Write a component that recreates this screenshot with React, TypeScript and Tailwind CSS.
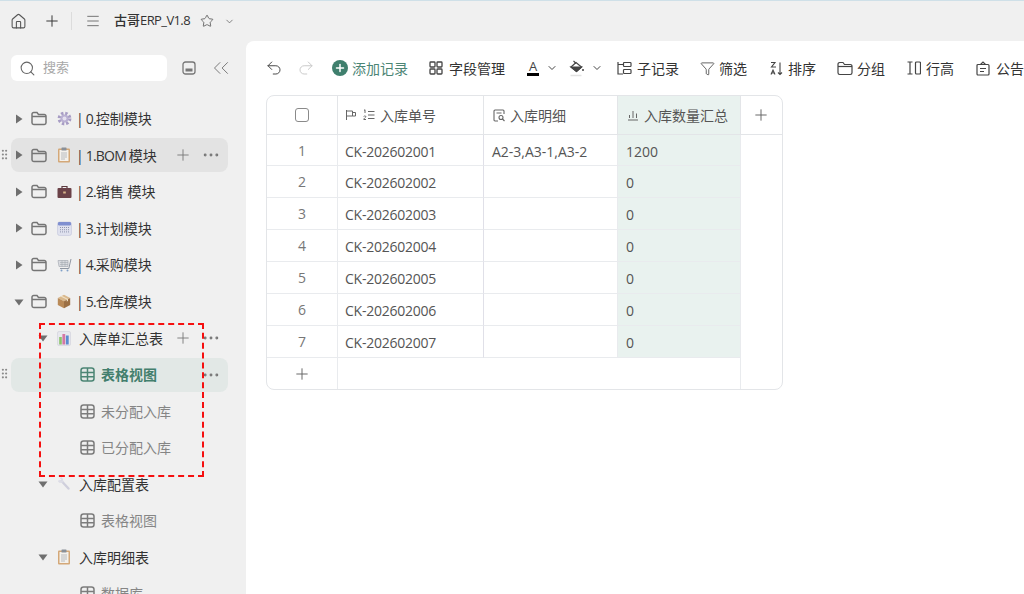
import { Plus, Ellipsis, House, Star, ChevronDown, Menu, Search, ChevronsLeft, Undo2, Redo2, Funnel, GripVertical } from 'lucide-react'
import type { ReactNode } from 'react'

/* ── Small hand drawn icons ── */
function Caret({ open }: { open?: boolean }) {
  return (
    <svg width="10" height="10" viewBox="0 0 10 10" className="shrink-0 text-[#6f6f6f]" fill="currentColor">
      {open ? <path d="M0.5 2.500h9L5 8.500z" /> : <path d="M2 .5v9L8.500 5z" />}
    </svg>
  )
}

function FolderIcon({ className = 'text-[#757575]', stroke = 1.5 }: { className?: string; stroke?: number }) {
  return (
    <svg width="16" height="15" viewBox="0 0 16 15" className={`shrink-0 ${className}`} fill="none" stroke="currentColor" strokeWidth={stroke}>
      <path d="M1 3.200A1.700 1.700 0 0 1 2.700 1.500H6l1.500 2h5.800A1.700 1.700 0 0 1 15 5.200v6.600a1.700 1.700 0 0 1-1.700 1.700H2.700A1.700 1.700 0 0 1 1 11.800z" />
      <path d="M1 5.500h14" />
    </svg>
  )
}

function GridIcon({ active }: { active?: boolean }) {
  return (
    <svg width="15" height="15" viewBox="0 0 15 15" className={`shrink-0 ${active ? 'text-[#4b8574]' : 'text-[#7c7c7c]'}`} fill="none" stroke="currentColor" strokeWidth="1.500">
      <rect x="1" y="1" width="13" height="13" rx="2.500" />
      <path d="M1 5.500h13M1 9.700h13M7.500 1v13" />
    </svg>
  )
}

function GearEmoji() {
  return (
    <svg width="15" height="15" viewBox="0 0 15 15">
      <circle cx="7.500" cy="7.500" r="5.200" fill="none" stroke="#a79cc4" strokeWidth="3.400" strokeDasharray="2.300 1.800" />
      <circle cx="7.500" cy="7.500" r="4" fill="#b9b0d2" />
      <circle cx="7.500" cy="7.500" r="2" fill="#e4e0ee" />
    </svg>
  )
}

function ClipEmoji() {
  return (
    <svg width="14" height="16" viewBox="0 0 14 16">
      <rect x="1" y="1.500" width="12" height="14" rx="1" fill="#d4a878" />
      <rect x="2.500" y="3" width="9" height="11" fill="#f4f1ec" />
      <rect x="4.500" y="0.500" width="5" height="3" rx="0.500" fill="#8a9098" />
      <path d="M4 6h6M4 8h6M4 10h6M4 12h4" stroke="#a9aeb5" strokeWidth="0.800" />
    </svg>
  )
}

function CaseEmoji() {
  return (
    <svg width="15" height="14" viewBox="0 0 15 14">
      <path d="M5 3V1.500h5V3" fill="none" stroke="#5d3a3f" strokeWidth="1.200" />
      <rect x="0.500" y="3" width="14" height="10" rx="1" fill="#6b4248" />
      <rect x="6.200" y="6.500" width="2.600" height="2" fill="#d8b48a" />
    </svg>
  )
}

function CalendarEmoji() {
  return (
    <svg width="15" height="15" viewBox="0 0 15 15">
      <rect x="0.500" y="1" width="14" height="13.500" rx="2" fill="#dfe1ee" stroke="#c3c6dc" strokeWidth="0.600" />
      <rect x="1" y="1" width="13" height="3.400" rx="1.200" fill="#7f8fd0" />
      <path d="M3 6.500h9M3 8.700h9M3 10.900h9" stroke="#8f95ae" strokeWidth="1" strokeDasharray="1 1" />
    </svg>
  )
}

function CartEmoji() {
  return (
    <svg width="15" height="14" viewBox="0 0 15 14" fill="none">
      <path d="M1 2.500h10v6H2z" fill="#d9dbe0" stroke="#a8acb4" strokeWidth="0.700" />
      <path d="M3 4.500h8M3 6.500h8M5 2.500v6M8 2.500v6" stroke="#9aa0a8" strokeWidth="0.500" />
      <path d="M14 1l-2.200 9.500H3" stroke="#8f96a2" strokeWidth="1" />
      <circle cx="4.500" cy="12.500" r="1" fill="#7fa0c8" />
      <circle cx="10.500" cy="12.500" r="1" fill="#7fa0c8" />
    </svg>
  )
}

function BoxEmoji() {
  return (
    <svg width="14" height="15" viewBox="0 0 14 15">
      <path d="M7 .8 13.200 4 7 7.200.8 4z" fill="#d9b88c" />
      <path d="M.8 4 7 7.200v7L.8 11z" fill="#b98a58" />
      <path d="M13.200 4 7 7.200v7l6.200-3.200z" fill="#9c7045" />
      <path d="M3.500 2.400 9.800 5.600v2l1.200-.6V5L4.700 1.800z" fill="#efe0c6" />
    </svg>
  )
}

function ChartEmoji() {
  return (
    <svg width="14" height="15" viewBox="0 0 14 15">
      <rect x="0.500" y="0.500" width="13" height="14" rx="1.500" fill="#e8e8ee" stroke="#d0d0da" strokeWidth="0.600" />
      <rect x="2.200" y="6" width="2.600" height="7.500" fill="#8cc46c" />
      <rect x="5.400" y="3" width="2.800" height="10.500" fill="#d478a4" />
      <rect x="8.900" y="4.500" width="2.800" height="9" fill="#5c8cd0" />
    </svg>
  )
}

function WrenchEmoji() {
  return (
    <svg width="14" height="14" viewBox="0 0 14 14" fill="none">
      <path d="M4.500 4 11.500 11.500" stroke="#cfcfdc" strokeWidth="2.400" strokeLinecap="round" />
      <path d="M1.500 3.500 3 5l2.500-.5L5 2 3.500.8" stroke="#dcdce6" strokeWidth="1.800" />
    </svg>
  )
}

/* ── Sidebar rows ── */
type RowProps = {
  label: string
  prefix?: string
  suffix?: string
  icon?: ReactNode
  open?: boolean
  level?: 0 | 1 | 2
  tone?: 'hover' | 'active'
  actions?: 'full' | 'more'
}

function TreeRow({ label, prefix, suffix, icon, open, level = 0, tone, actions }: RowProps) {
  const bg = tone === 'hover' ? 'bg-[#e3e3e3]' : tone === 'active' ? 'bg-[#e2e8e6]' : ''
  return (
    <div className="relative h-[36.55px] pl-[11px] w-[228px] flex items-center shrink-0">
      {tone && <GripVertical size={13} className="absolute left-[-2px] top-[11px] text-[#8a8a8a]" />}
      <div className={`h-[34px] w-[217px] rounded-lg flex items-center ${bg}`}>
        {level === 0 && (
          <>
            <span className="w-[16px] flex justify-center"><Caret open={open} /></span>
            <span className="ml-[4px]"><FolderIcon /></span>
            <span className="ml-[9px] w-[16px] flex justify-center">{icon}</span>
            <span className="ml-[4px] text-[14px] text-[#333] whitespace-pre">
              <span className="tracking-[-0.8px]">{prefix}</span>{label}{suffix}
            </span>
          </>
        )}
        {level === 1 && (
          <>
            <span className="ml-[26px] w-[12px] flex justify-center"><Caret open={open} /></span>
            <span className="ml-[7px] w-[16px] flex justify-center">{icon}</span>
            <span className="ml-[7px] text-[14px] text-[#333]">{label}</span>
          </>
        )}
        {level === 2 && (
          <>
            <span className="ml-[69px]"><GridIcon active={tone === 'active'} /></span>
            <span className={`ml-[6px] text-[14px] ${tone === 'active' ? 'font-bold text-[#437f6d]' : 'text-[#858585]'}`}>{label}</span>
          </>
        )}
        {actions && (
          <div className="ml-auto flex items-center text-[#777]">
            {actions === 'full' && <Plus size={18} strokeWidth={1.2} />}
            <Ellipsis size={20} strokeWidth={1.500} className="ml-[9px] mr-[7px]" />
          </div>
        )}
      </div>
    </div>
  )
}

function Sidebar() {
  return (
    <div className="relative w-[246px] shrink-0 flex flex-col overflow-hidden">
      <div className="flex items-center h-[26px] mt-[14px] ml-[11px] shrink-0">
        <div className="w-[156px] h-[26px] rounded-md bg-white flex items-center pl-[8px] text-[#666]">
          <Search size={17} strokeWidth={1.500} />
          <span className="ml-[7px] text-[13px] text-[#a8a8a8]">搜索</span>
        </div>
        <svg width="14" height="14" viewBox="0 0 14 14" className="ml-[15px] text-[#777]" fill="none" stroke="currentColor" strokeWidth="1.300">
          <rect x="1" y="1" width="12" height="12" rx="2.500" />
          <rect x="3.500" y="7.500" width="7" height="3" fill="currentColor" stroke="none" />
        </svg>
        <ChevronsLeft size={26} strokeWidth={0.9} className="ml-[12px] text-[#777]" />
      </div>
      <div className="mt-[19.5px] flex flex-col">
        <TreeRow prefix="| 0." label="控制模块" icon={<GearEmoji />} />
        <TreeRow prefix="| 1.BOM " label="模块" icon={<ClipEmoji />} tone="hover" actions="full" />
        <TreeRow prefix="| 2." label="销售" suffix=" 模块" icon={<CaseEmoji />} />
        <TreeRow prefix="| 3." label="计划模块" icon={<CalendarEmoji />} />
        <TreeRow prefix="| 4." label="采购模块" icon={<CartEmoji />} />
        <TreeRow prefix="| 5." label="仓库模块" icon={<BoxEmoji />} open />
        <TreeRow label="入库单汇总表" icon={<ChartEmoji />} open level={1} actions="full" />
        <TreeRow label="表格视图" level={2} tone="active" actions="more" />
        <TreeRow label="未分配入库" level={2} />
        <TreeRow label="已分配入库" level={2} />
        <TreeRow label="入库配置表" icon={<WrenchEmoji />} open level={1} />
        <TreeRow label="表格视图" level={2} />
        <TreeRow label="入库明细表" icon={<ClipEmoji />} open level={1} />
        <TreeRow label="数据库" level={2} />
      </div>
      {/* annotation box drawn over the screenshot */}
      <div className="absolute left-[39px] top-[282px] w-[165px] h-[154px] border-2 border-dashed border-[#f50f0f]" />
    </div>
  )
}

/* ── Toolbar ── */
function ToolText({ children, ml }: { children: ReactNode; ml: string }) {
  return <span className={`${ml} text-[14px] text-[#333] whitespace-nowrap`}>{children}</span>
}

function Toolbar() {
  const icon = 'shrink-0 text-[#444]'
  return (
    <div className="h-[54px] flex items-center pl-[19px] shrink-0 overflow-hidden">
      <Undo2 size={18} strokeWidth={1.300} className={icon} />
      <Redo2 size={18} strokeWidth={1.300} className="ml-[14px] shrink-0 text-[#c8c8c8]" />
      <span className="ml-[17px] w-[16px] h-[16px] rounded-full bg-[#3f7f6d] flex items-center justify-center shrink-0">
        <Plus size={12} strokeWidth={3} className="text-white" />
      </span>
      <ToolText ml="ml-[4px] !text-[#4c8575]">添加记录</ToolText>
      <svg width="14" height="14" viewBox="0 0 14 14" className={`ml-[21px] ${icon}`} fill="none" stroke="currentColor" strokeWidth="1.300">
        <rect x="1" y="1" width="5" height="5" rx="0.800" />
        <rect x="8" y="1" width="5" height="5" rx="0.800" />
        <rect x="1" y="8" width="5" height="5" rx="0.800" />
        <rect x="8" y="8" width="5" height="5" rx="0.800" />
      </svg>
      <ToolText ml="ml-[6px]">字段管理</ToolText>
      <span className="ml-[21px] w-[14px] flex flex-col items-center shrink-0">
        <span className="text-[13px] leading-[13px] text-[#444]">A</span>
        <span className="w-[12px] h-[3px] bg-black" />
      </span>
      <ChevronDown size={12} className={`ml-[6px] ${icon}`} />
      <svg width="16" height="17" viewBox="0 0 16 17" className="ml-[11px] shrink-0 text-[#444]" fill="none" stroke="currentColor" strokeWidth="1.200">
        <path d="M2 7 7 2.500l5.500 4.500-5 4.500z" />
        <path d="M2 7h10.500l-5 4.500z" fill="currentColor" />
        <path d="M4.500 .8 7 3.500" />
        <circle cx="14" cy="10" r="1" fill="currentColor" stroke="none" />
        <path d="M1.500 15.500h11" stroke="#e2e2e2" strokeWidth="1.500" />
      </svg>
      <ChevronDown size={12} className={`ml-[6px] ${icon}`} />
      <svg width="15" height="14" viewBox="0 0 15 14" className={`ml-[14px] ${icon}`} fill="none" stroke="currentColor" strokeWidth="1.200">
        <path d="M1 1v12h5M1 3.500h5" />
        <rect x="6.500" y="1.500" width="7.500" height="4" rx="0.800" />
        <rect x="6.500" y="8.500" width="7.500" height="4" rx="0.800" />
      </svg>
      <ToolText ml="ml-[5px]">子记录</ToolText>
      <Funnel size={15} strokeWidth={1.300} className={`ml-[21px] ${icon}`} />
      <ToolText ml="ml-[4px]">筛选</ToolText>
      <svg width="13" height="15" viewBox="0 0 13 15" className={`ml-[23px] ${icon}`} fill="none" stroke="currentColor" strokeWidth="1.100">
        <path d="M1 1.500h4L1.500 6H6M1 13.500 3 9l2 4.500M1.600 12h2.800" />
        <path d="M10 1.500v12M8 11.500l2 2 2-2" />
      </svg>
      <ToolText ml="ml-[5px]">排序</ToolText>
      <FolderIcon className="ml-[21px] text-[#444]" stroke={1.2} />
      <ToolText ml="ml-[4px]">分组</ToolText>
      <svg width="14" height="14" viewBox="0 0 14 14" className={`ml-[22px] ${icon}`} fill="none" stroke="currentColor" strokeWidth="1.200">
        <path d="M.5 1h5M.5 13h5M3 1v12" />
        <rect x="8.500" y="1" width="5" height="12" rx="1" />
      </svg>
      <ToolText ml="ml-[5px]">行高</ToolText>
      <svg width="14" height="15" viewBox="0 0 14 15" className={`ml-[22px] ${icon}`} fill="none" stroke="currentColor" strokeWidth="1.200">
        <path d="M1 4.500a1 1 0 0 1 1-1h10a1 1 0 0 1 1 1V13a1 1 0 0 1-1 1H2a1 1 0 0 1-1-1z" />
        <path d="M4.500 3.500 7 1l2.500 2.500M4 7.500h6M4 10.500h4" />
      </svg>
      <ToolText ml="ml-[6px]">公告</ToolText>
    </div>
  )
}

/* ── Grid ── */
const CELLS = [
  ['CK-202602001', 'A2-3,A3-1,A3-2', '1200'],
  ['CK-202602002', '', '0'],
  ['CK-202602003', '', '0'],
  ['CK-202602004', '', '0'],
  ['CK-202602005', '', '0'],
  ['CK-202602006', '', '0'],
  ['CK-202602007', '', '0'],
]

const COLS = 'grid grid-cols-[71px_146px_134px_123px_40px]'

function DataTable() {
  return (
    <div className="ml-[20px] w-[517px] h-[295px] border border-[#e3e5e8] rounded-lg overflow-hidden text-[#555] text-[14px]">
      <div className={`${COLS} h-[39px] border-b border-[#e3e5e8]`}>
        <div className="border-r border-[#e3e5e8] flex items-center justify-center">
          <span className="w-[14px] h-[14px] rounded-[3px] border border-[#8a8a8a]" />
        </div>
        <div className="border-r border-[#e3e5e8] flex items-center pl-[7px]">
          <svg width="12" height="12" viewBox="0 0 12 12" className="text-[#666]" fill="none" stroke="currentColor" strokeWidth="1">
            <path d="M1.500 1v10M1.500 2h6v5h-6" />
            <path d="M7.500 3.500h3v3.500h-3" />
          </svg>
          <svg width="12" height="12" viewBox="0 0 12 12" className="ml-[6px] text-[#666]" fill="none" stroke="currentColor" strokeWidth="1">
            <path d="M5 2.500h6.500M5 6h6.500M5 9.500h6.500M1 1.500l1-.8v3.300M.8 7.500c.5-1 2-.8 2 .2 0 .8-2 1.500-2 2.800h2.200" />
          </svg>
          <span className="ml-[5px]">入库单号</span>
        </div>
        <div className="border-r border-[#e3e5e8] flex items-center pl-[9px]">
          <svg width="13" height="13" viewBox="0 0 13 13" className="text-[#666]" fill="none" stroke="currentColor" strokeWidth="1.100">
            <path d="M5 12H2a1 1 0 0 1-1-1V2a1 1 0 0 1 1-1h8a1 1 0 0 1 1 1v3" />
            <circle cx="8" cy="8.500" r="2" />
            <path d="M9.500 10l2 2M3.500 4h5" />
          </svg>
          <span className="ml-[4px]">入库明细</span>
        </div>
        <div className="bg-[#e9f2ef] border-r border-[#e3e5e8] flex items-center pl-[9px]">
          <svg width="12" height="12" viewBox="0 0 12 12" className="text-[#666]" fill="none" stroke="currentColor" strokeWidth="1">
            <path d="M1 11h10M2.500 9V6M6 9V2M9.500 9V4.500" />
          </svg>
          <span className="ml-[5px]">入库数量汇总</span>
        </div>
        <div className="flex items-center justify-center text-[#666]">
          <Plus size={18} strokeWidth={1.300} />
        </div>
      </div>
      {CELLS.map((row, i) => (
        <div key={row[0]} className={`${COLS} ${i === 0 ? 'h-[31px]' : 'h-[32px]'}`}>
          <div className="border-r border-b border-[#e9ebee] flex items-center justify-center text-[#777]">{i + 1}</div>
          <div className="border-r border-b border-r-[#e0e0e8] border-b-[#e9ebee] flex items-center pl-[7px] pt-[2px] tracking-[-0.25px]">{row[0]}</div>
          <div className="border-r border-b border-[#e9ebee] flex items-center pl-[8px] pt-[2px]">{row[1]}</div>
          <div className="bg-[#e9f2ef] border-r border-b border-[#e9ebee] flex items-center pl-[8px] pt-[2px]">{row[2]}</div>
          <div />
        </div>
      ))}
      <div className="grid grid-cols-[71px_403px_40px] h-[31px]">
        <div className="border-r border-[#e9ebee] flex items-center justify-center text-[#666]">
          <Plus size={18} strokeWidth={1.300} />
        </div>
        <div className="border-r border-[#e9ebee]" />
        <div />
      </div>
    </div>
  )
}

export default function App() {
  return (
    <div className="w-[1024px] h-[594px] overflow-hidden bg-[#f0f0f0] flex flex-col border-t border-[#cfe0e8] font-['Open_Sans','Noto_Sans_CJK_SC',sans-serif]">
      <div className="h-[40px] flex items-center shrink-0 text-[#555]">
        <House size={17} strokeWidth={1.500} className="ml-[10px]" />
        <Plus size={18} strokeWidth={1.300} className="ml-[16px] text-[#333]" />
        <span className="ml-[10px] w-px h-[18px] bg-[#dcdcdc]" />
        <Menu size={16} strokeWidth={1.200} className="ml-[13px]" />
        <span className="ml-[13px] text-[13px] font-medium text-[#333]">古哥<span className="tracking-[-0.6px]">ERP_V1.8</span></span>
        <Star size={14} strokeWidth={1.400} className="ml-[10px]" />
        <ChevronDown size={11} strokeWidth={1.500} className="ml-[10px]" />
      </div>
      <div className="flex flex-1 min-h-0">
        <Sidebar />
        <div className="flex-1 min-w-0 bg-white rounded-tl-lg flex flex-col">
          <Toolbar />
          <DataTable />
        </div>
      </div>
    </div>
  )
}
